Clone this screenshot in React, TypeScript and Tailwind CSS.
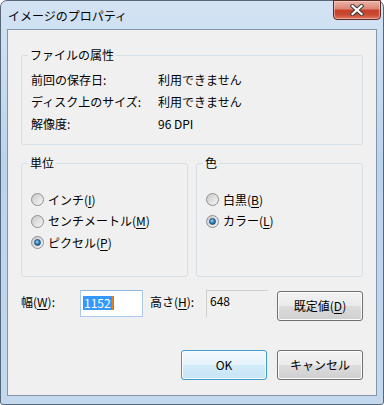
import React from "react";

const font = { fontFamily: '"Noto Sans CJK JP", "Noto Sans", sans-serif' };

function Radio({ checked }: { checked?: boolean }) {
	return (
		<span className="w-[13px] h-[13px] rounded-full border border-[#8e8f8f] bg-[linear-gradient(135deg,#c9c9c9,#f6f6f6)] flex items-center justify-center shrink-0">
			{checked && (
				<span className="w-[7px] h-[7px] rounded-full border border-[#1d4f7c] bg-[radial-gradient(circle_at_40%_35%,#8fdcf8,#2a78b3_55%,#17507f)]" />
			)}
		</span>
	);
}

function Mn({ children }: { children: React.ReactNode }) {
	return <span className="underline underline-offset-2">{children}</span>;
}

function Option({ label, mn, checked }: { label: string; mn: string; checked?: boolean }) {
	return (
		<div className="flex items-center gap-[4px] h-[21.5px]">
			<Radio checked={checked} />
			<span>
				{label}(<Mn>{mn}</Mn>)
			</span>
		</div>
	);
}

function Group({ title, className, children }: { title: string; className?: string; children: React.ReactNode }) {
	return (
		<fieldset className={`border border-[#d5dfe5] rounded-[3px] ${className ?? ""}`}>
			<legend className="ml-[6px] px-[2px] leading-[14px]">{title}</legend>
			{children}
		</fieldset>
	);
}

function Button({ children, primary }: { children: React.ReactNode; primary?: boolean }) {
	return (
		<button
			className={`w-[86px] h-[30px] rounded-[3px] border shadow-[inset_0_0_0_1px_#fcfcfc] ${
				primary
					? "border-[#3c9ad0] bg-[linear-gradient(#f3f9fd_0%,#e4f2fb_50%,#d3ebf8_50%,#c6e4f5_100%)]"
					: "border-[#707070] bg-[linear-gradient(#f2f2f2_0%,#ebebeb_50%,#dddddd_50%,#cfcfcf_100%)]"
			}`}
		>
			{children}
		</button>
	);
}

export default function App() {
	return (
		<div className="w-[384px] h-[405px] bg-white text-[12px] text-black" style={font}>
			<div className="w-[384px] h-[405px] flex flex-col rounded-t-[7px] rounded-b-[3px] border border-[#57677a] bg-[linear-gradient(#d3e3f4,#bcd3ec_40%,#c4d8ee)] px-[6px] pb-[8px]">
				{/* title bar */}
				<div className="h-[28px] flex items-start justify-between shrink-0">
					<span className="mt-[7px] pl-[1px] leading-[16px]">イメージのプロパティ</span>
					<div className="-mr-[4px] -mt-px w-[48px] h-[20px] rounded-b-[4px] border border-[#5a2a24] bg-[linear-gradient(#eab3a8_0%,#dc8574_45%,#c8402a_50%,#c84a33_75%,#e0745c_100%)] shadow-[inset_0_0_0_1px_rgba(255,220,210,0.5)] flex items-center justify-center">
						<svg width="14" height="12" viewBox="0 0 14 12">
							<path d="M2.5 2 L11.5 10 M11.5 2 L2.5 10" stroke="#3b3b3b" strokeWidth="4.2" strokeLinecap="square" />
							<path d="M2.5 2 L11.5 10 M11.5 2 L2.5 10" stroke="#ffffff" strokeWidth="2.2" strokeLinecap="square" />
						</svg>
					</div>
				</div>

				{/* client area */}
				<div className="flex-1 border border-[#8495a9] bg-[#f0f0f0] px-[13px] flex flex-col">
					<Group title="ファイルの属性" className="mt-[18px]">
						<div className="grid grid-cols-[127px_1fr] leading-[22px] pl-[9px] pt-[7px] pb-[9px]">
							<span>前回の保存日:</span>
							<span>利用できません</span>
							<span>ディスク上のサイズ:</span>
							<span>利用できません</span>
							<span>解像度:</span>
							<span>96 DPI</span>
						</div>
					</Group>

					<div className="flex gap-[8px] mt-[11px]">
						<Group title="単位" className="w-[167px] h-[121px]">
							<div className="pl-[9px] pt-[19px]">
								<Option label="インチ" mn="I" />
								<Option label="センチメートル" mn="M" />
								<Option label="ピクセル" mn="P" checked />
							</div>
						</Group>
						<Group title="色" className="w-[167px] h-[121px]">
							<div className="pl-[9px] pt-[19px]">
								<Option label="白黒" mn="B" />
								<Option label="カラー" mn="L" checked />
							</div>
						</Group>
					</div>

					{/* size row */}
					<div className="flex items-start mt-[13px]">
						<span className="w-[59px] leading-[24px]">
							幅(<Mn>W</Mn>):
						</span>
						<div className="w-[63px] h-[27px] border border-[#a9c9e8] border-t-[#8fb6de] bg-white pl-[2px] pt-[3px]">
							<span className="inline-flex items-center h-[14px] bg-[#3399ff] text-white leading-[14px] pl-px pr-[1px]">
								1152
								<span className="w-px h-[14px] bg-[#e8801c] ml-px" />
							</span>
						</div>
						<span className="w-[56px] ml-[7px] leading-[24px]">
							高さ(<Mn>H</Mn>):
						</span>
						<div className="w-[62px] h-[27px] border-t border-l border-[#cfcfcf] pl-[3px] pt-[2px] leading-[16px]">648</div>
						<div className="ml-auto mt-px">
							<Button>
								既定値(<Mn>D</Mn>)
							</Button>
						</div>
					</div>

					{/* dialog buttons */}
					<div className="flex justify-end gap-[10px] mt-[29px]">
						<Button primary>OK</Button>
						<Button>キャンセル</Button>
					</div>
				</div>
			</div>
		</div>
	);
}
